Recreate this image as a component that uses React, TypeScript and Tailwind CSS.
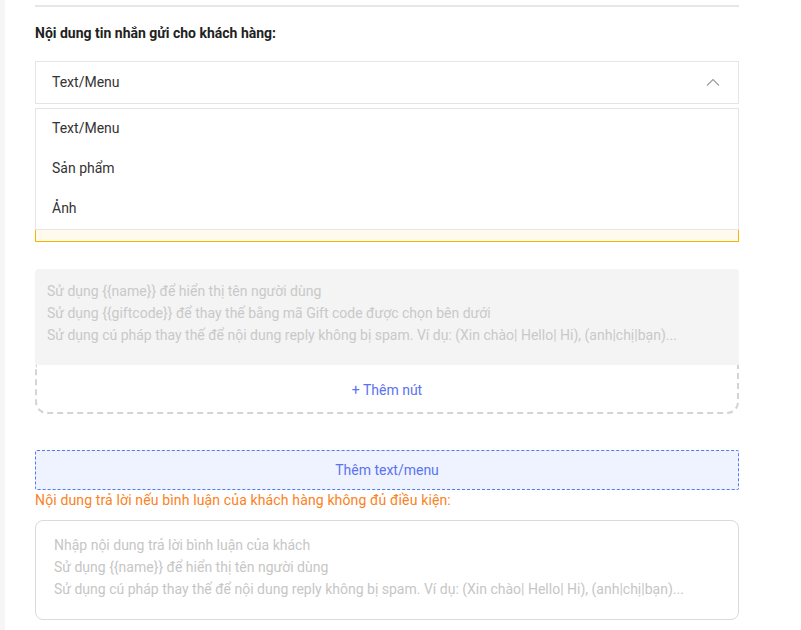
import { ReactNode } from 'react';

const options = ['Text/Menu', 'Sản phẩm', 'Ảnh'];

function Hint({ children }: { children: ReactNode }) {
  return <div className="h-[22px] leading-[22px] whitespace-nowrap">{children}</div>;
}

export default function App() {
  return (
    <div className="flex min-h-[630px] bg-white font-['Roboto',sans-serif] text-[14px]">
      {/* dải xám bên trái */}
      <div className="w-[5px] shrink-0 bg-[#f6f6f6]" />

      <div className="ml-[30px] w-[704px] pt-[5px] pb-[12px]">
        <div className="h-[2px] bg-[#e6e6e6]" />

        <h3 className="mt-[16px] h-[20px] leading-[20px] font-bold text-[#222]">
          Nội dung tin nhắn gửi cho khách hàng:
        </h3>

        {/* Select đang mở */}
        <div className="mt-[18px] flex h-[43px] items-center justify-between border border-[#e5e5e5] pl-[16px] pr-[18px] pb-[1px] text-[#333]">
          <span>Text/Menu</span>
          <svg width="14" height="8" viewBox="0 0 14 8" fill="none">
            <polyline points="1,7.5 7,1.5 13,7.5" stroke="#9a9a9a" strokeWidth="1.1" />
          </svg>
        </div>

        <div className="relative mt-[4px]">
          {/* ô nhập đang focus, bị menu che */}
          <div className="h-[134px] border border-[#f7b500] bg-[#fffaeb]" />
          <ul className="absolute left-0 right-0 top-0 h-[122px] border border-[#e5e5e5] bg-white text-[#333]">
            {options.map((o) => (
              <li key={o} className="flex h-[40px] items-center pl-[16px] pb-[2px]">
                {o}
              </li>
            ))}
          </ul>
        </div>

        {/* Khối tin nhắn + nút */}
        <div className="mt-[27px]">
          <div className="h-[96px] rounded-t-[4px] bg-[#f4f4f4] px-[12px] pt-[11px] text-[#c9c9c9]">
            <Hint>Sử dụng {'{{name}}'} để hiển thị tên người dùng</Hint>
            <Hint>Sử dụng {'{{giftcode}}'} để thay thế bằng mã Gift code được chọn bên dưới</Hint>
            <Hint>Sử dụng cú pháp thay thế để nội dung reply không bị spam. Ví dụ: (Xin chào| Hello| Hi), (anh|chị|bạn)...</Hint>
          </div>
          <div className="flex h-[49px] items-center justify-center rounded-b-[12px] border-2 border-t-0 border-dashed border-[#d4d4d4] pt-[3px] text-[#5a73f2]">
            + Thêm nút
          </div>
        </div>

        <button className="mt-[36px] flex h-[40px] w-full items-center justify-center rounded-[2px] border border-dashed border-[#4d7cf6] bg-[#eef3ff] text-[#5a73f2]">
          Thêm text/menu
        </button>

        <p className="h-[20px] leading-[20px] tracking-[0.14px] text-[#fb8224]">
          Nội dung trả lời nếu bình luận của khách hàng không đủ điều kiện:
        </p>

        <div className="mt-[10px] h-[100px] rounded-[8px] border border-[#dadada] pl-[18px] pt-[13px] text-[#c6c6c6]">
          <Hint>Nhập nội dung trả lời bình luận của khách</Hint>
          <Hint>Sử dụng {'{{name}}'} để hiển thị tên người dùng</Hint>
          <Hint>Sử dụng cú pháp thay thế để nội dung reply không bị spam. Ví dụ: (Xin chào| Hello| Hi), (anh|chị|bạn)...</Hint>
        </div>
      </div>
    </div>
  );
}
